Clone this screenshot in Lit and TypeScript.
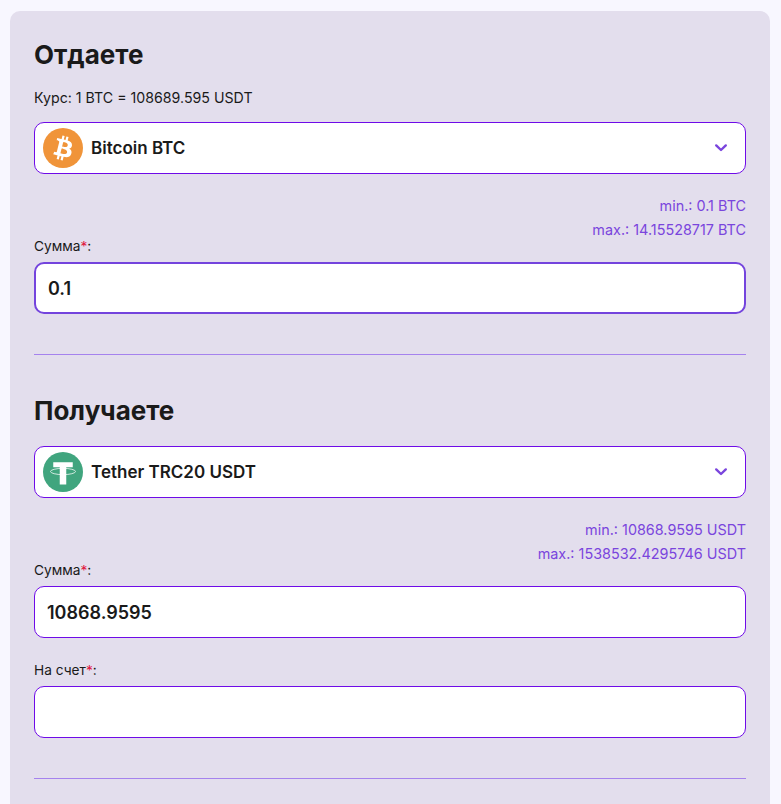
import { LitElement, html, css } from "lit";
import { customElement } from "lit/decorators.js";

const chevron = html`<svg class="chev" viewBox="0 0 14 10" width="14" height="10" fill="none" aria-hidden="true"><path d="M2.2 2.4 7 7 11.8 2.4" stroke="#7a45dd" stroke-width="2.4" stroke-linecap="round" stroke-linejoin="round"/></svg>`;

const btc = html`<svg class="coin" viewBox="0 0 32 32" aria-hidden="true"><circle cx="16" cy="16" r="16" fill="#f09439"/><path fill="#fff" d="M23.189 14.02c.314-2.096-1.283-3.223-3.465-3.975l.708-2.84-1.728-.43-.69 2.765c-.454-.114-.92-.22-1.385-.326l.695-2.783L15.596 6l-.708 2.839c-.376-.086-.746-.17-1.104-.26l.002-.009-2.384-.595-.46 1.846s1.283.294 1.256.312c.7.175.826.638.805 1.006l-.806 3.235c.048.012.11.03.18.057l-.183-.045-1.13 4.532c-.086.212-.303.531-.793.41.018.025-1.256-.313-1.256-.313l-.858 1.978 2.25.561c.418.105.828.215 1.231.318l-.715 2.872 1.727.43.708-2.84c.472.127.93.245 1.378.357l-.706 2.828 1.728.43.715-2.866c2.948.558 5.164.333 6.097-2.333.752-2.146-.037-3.385-1.588-4.192 1.13-.26 1.98-1.003 2.207-2.538zm-3.95 5.538c-.533 2.147-4.148.986-5.32.695l.95-3.805c1.172.293 4.929.872 4.37 3.11zm.535-5.569c-.487 1.953-3.495.96-4.47.717l.86-3.45c.975.243 4.118.696 3.61 2.733z"/></svg>`;

const usdt = html`<svg class="coin" viewBox="0 0 32 32" aria-hidden="true"><circle cx="16" cy="16" r="16" fill="#40a57e"/><path fill="#fff" d="M8.2 8.2h15.6v4h-5.2V26h-5.2V12.2H8.2z"/><ellipse cx="16" cy="15.6" rx="10" ry="2.5" fill="none" stroke="#fff" stroke-opacity=".75" stroke-width=".8"/></svg>`;

@customElement("app-root")
export class AppRoot extends LitElement {
  static styles = css`
    :host {
      display: block;
      height: 804px;
      overflow: hidden;
      background: #f8f7ff;
      font-family: Inter, "Liberation Sans", sans-serif;
      color: #1a1a1a;
    }
    * { box-sizing: border-box; }
    .card {
      margin: 11px 11px 0 10px;
      padding: 24px 24px 40px;
      background: #e3deed;
      border-radius: 10px;
    }
    h2 {
      margin: 0;
      font-size: 26px;
      line-height: 40px;
      font-weight: 700;
    }
    .rate {
      margin-top: 12px;
      font-size: 14.2px;
      line-height: 22px;
    }
    .select {
      display: flex;
      align-items: center;
      gap: 8px;
      height: 52px;
      padding: 0 17px 0 8px;
      background: #fff;
      border: 1px solid #6f0be8;
      border-radius: 10px;
      font-size: 17px;
      font-weight: 600;
    }
    .rate + .select { margin-top: 13px; }
    h2 + .select { margin-top: 15px; }
    .coin { width: 40px; height: 40px; flex: none; }
    .name { flex: 1; }
    .chev { flex: none; }
    .limits {
      margin: 20px 0 -4px;
      text-align: right;
      font-size: 14.4px;
      line-height: 24px;
      color: #7a45dd;
    }
    label {
      display: block;
      font-size: 13.7px;
      line-height: 16px;
    }
    label i { font-style: normal; color: #e0143c; }
    .input {
      display: block;
      width: 100%;
      height: 52px;
      margin-top: 8px;
      padding: 0 12px;
      background: #fff;
      border: 1px solid #6f0be8;
      border-radius: 10px;
      font: 600 18px Inter, "Liberation Sans", sans-serif;
      color: #1a1a1a;
      outline: none;
    }
    .input.focus {
      border: 2px solid #7444dd;
    }
    .gap { margin-top: 24px; }
    hr {
      height: 1px;
      margin: 40px 0 0;
      border: 0;
      background: #a582ee;
    }
    .section-title { margin-top: 36px; }
  `;

  render() {
    return html`
      <div class="card">
        <h2>Отдаете</h2>
        <div class="rate">Курс: 1 BTC = 108689.595 USDT</div>
        <div class="select">${btc}<span class="name">Bitcoin BTC</span>${chevron}</div>
        <div class="limits">
          <div>min.: 0.1 BTC</div>
          <div>max.: 14.15528717 BTC</div>
        </div>
        <label>Сумма<i>*</i>:</label>
        <input class="input focus" .value=${"0.1"} />
        <hr />
        <h2 class="section-title">Получаете</h2>
        <div class="select">${usdt}<span class="name">Tether TRC20 USDT</span>${chevron}</div>
        <div class="limits">
          <div>min.: 10868.9595 USDT</div>
          <div>max.: 1538532.4295746 USDT</div>
        </div>
        <label>Сумма<i>*</i>:</label>
        <input class="input" .value=${"10868.9595"} />
        <label class="gap">На счет<i>*</i>:</label>
        <input class="input" />
        <hr />
      </div>
    `;
  }
}
